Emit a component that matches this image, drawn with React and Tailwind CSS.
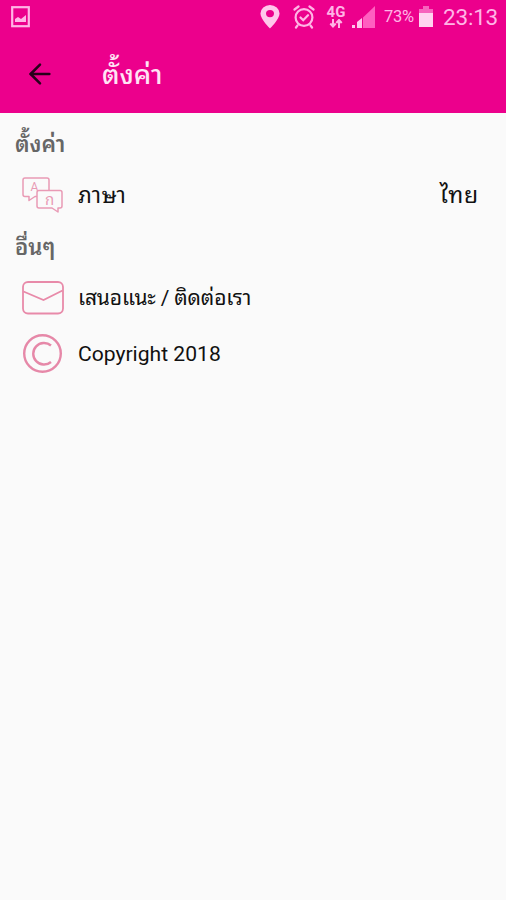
import { ArrowLeft } from "lucide-react";

function StatusBar() {
  return (
    <div className="flex h-[34px] items-center pl-[11px] pr-[9px] text-[#ffb5e6]">
      <svg width="20" height="22" viewBox="0 0 20 22">
        <rect x="1.2" y="1.2" width="16.6" height="19" fill="none" stroke="currentColor" strokeWidth="2.2" />
        <path d="M4 16v-3l3-2 3 2 5-4v7z" fill="currentColor" />
      </svg>

      <div className="ml-auto flex items-center">
        <svg width="20" height="24" viewBox="0 0 18 24" preserveAspectRatio="none">
          <path
            d="M9 0a8.6 8.6 0 0 0-8.6 8.6C.4 14.5 9 23.5 9 23.5s8.6-9 8.6-14.9A8.6 8.6 0 0 0 9 0zm0 5a3.6 3.6 0 1 1 0 7.2A3.6 3.6 0 0 1 9 5z"
            fill="#ffc6eb"
          />
        </svg>

        <svg className="ml-[13px]" width="22" height="24" viewBox="0 0 22 24" fill="none" stroke="currentColor" strokeWidth="2.2" strokeLinecap="round">
          <circle cx="11" cy="12.5" r="8.4" />
          <path d="M1.5 4.5l4-3M20.5 4.5l-4-3M4.5 20.5L3 22.5M17.5 20.5l1.5 2M7.5 12.5l2.7 2.7 4.8-5" />
        </svg>

        <div className="ml-[11px] flex w-[20px] flex-col items-center">
          <span className="text-[15px] font-bold leading-[13px]">4G</span>
          <svg width="14" height="9" viewBox="0 0 14 9" fill="none" stroke="currentColor" strokeWidth="2">
            <path d="M4 0v7M1.3 4.5L4 7.5l2.7-3M10 9V1M7.3 4L10 1l2.7 3" />
          </svg>
        </div>

        <svg className="ml-[6px]" width="23" height="24" viewBox="0 0 23 24">
          <path d="M11 12.5L23 1v22H11z" fill="#ff5fc0" />
          <path d="M0 20h3v3H0zM5 17l5-4v10H5z" fill="#ffc6eb" />
        </svg>

        <span className="ml-[9px] w-[31px] whitespace-nowrap pt-px text-[16.5px] tracking-[-0.3px]">73%</span>

        <svg className="ml-[4px]" width="14" height="22" viewBox="0 0 14 22">
          <path d="M4 0h6v3h4v5H0V3h4z" fill="#f763bd" />
          <path d="M0 7h14v14H0z" fill="#ffd3f0" />
        </svg>

        <span className="ml-[10px] w-[54px] whitespace-nowrap pt-px text-[22.5px] tracking-[-0.2px]">23:13</span>
      </div>
    </div>
  );
}

function LanguageIcon() {
  return (
    <svg width="42" height="38" viewBox="0 0 42 38" fill="none" stroke="#e99ab5" strokeWidth="1.5" strokeLinejoin="round">
      <path d="M15 20.5h-2L7 24.5v-4H3a2 2 0 0 1-2-2V4a2 2 0 0 1 2-2h22a2 2 0 0 1 2 2v10.5" />
      <path d="M17 14.5h21a2 2 0 0 1 2 2V30a2 2 0 0 1-2 2h-2v4l-6-4H17a2 2 0 0 1-2-2V16.5a2 2 0 0 1 2-2z" />
      <text x="8.5" y="15" fontSize="12" fill="#e99ab5" stroke="none">A</text>
      <text x="23" y="28.5" fontSize="15" fill="#e99ab5" stroke="none">ก</text>
    </svg>
  );
}

function MailIcon() {
  return (
    <svg width="42" height="34" viewBox="0 0 42 34" fill="none" stroke="#e88aa9" strokeWidth="1.8">
      <rect x="1" y="1" width="40" height="31.5" rx="5" />
      <path d="M1.5 10.5L21.5 19l19-9.5" />
    </svg>
  );
}

function CopyrightIcon() {
  return (
    <svg width="40" height="40" viewBox="0 0 40 40" fill="none" stroke="#e688a8" strokeWidth="2.4">
      <circle cx="20.5" cy="19.5" r="18.3" />
      <path d="M29 11.5a10.8 10.8 0 1 0 0 16.5" />
    </svg>
  );
}

function SectionTitle({ children }) {
  return (
    <h2 className="h-[47px] px-[15px] pt-px text-[22px] font-semibold leading-[47px] text-[#666]">
      {children}
    </h2>
  );
}

function SettingItem({ icon, label, value, labelClass }) {
  return (
    <div className="flex h-[56px] items-center pl-[22px] pr-[27px] text-[#111]">
      <div className="flex w-[56px] items-center">{icon}</div>
      <span className={`whitespace-nowrap ${labelClass}`}>{label}</span>
      {value && (
        <span className="ml-auto pt-[2px] text-[23px] tracking-[0.8px]">{value}</span>
      )}
    </div>
  );
}

export default function App() {
  return (
    <div className="h-[900px] w-[506px] overflow-hidden bg-[#fafafa] font-['Roboto','Noto_Sans_Thai_Looped','Loma','Waree','Garuda','Droid_Sans_Thai','Noto_Sans_Thai','DejaVu_Sans',sans-serif]">
      <header className="h-[113px] bg-[#ec008c]">
        <StatusBar />
        <div className="flex h-[79px] items-center pl-[24px]">
          <ArrowLeft size={32} strokeWidth={1.9} className="text-[#26001a]" />
          <h1 className="ml-[46px] pt-[3px] text-[27px] font-medium text-[#ffe4f5]">ตั้งค่า</h1>
        </div>
      </header>

      <main className="pt-[7px]">
        <SectionTitle>ตั้งค่า</SectionTitle>
        <SettingItem icon={<LanguageIcon />} label="ภาษา" value="ไทย" labelClass="text-[22px] tracking-[0.3px]" />
        <SectionTitle>อื่นๆ</SectionTitle>
        <SettingItem icon={<MailIcon />} label="เสนอแนะ / ติดต่อเรา" labelClass="pt-[2px] text-[21px] tracking-[-0.15px]" />
        <SettingItem icon={<CopyrightIcon />} label="Copyright 2018" labelClass="text-[21.1px]" />
      </main>
    </div>
  );
}
